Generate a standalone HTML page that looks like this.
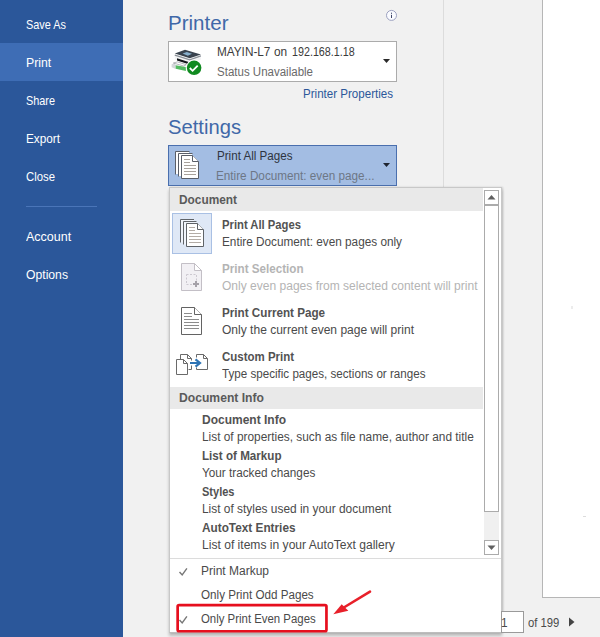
<!DOCTYPE html>
<html><head><meta charset="utf-8"><title>Print</title>
<style>
html,body{margin:0;padding:0}
body{width:600px;height:637px;position:relative;overflow:hidden;background:#f1f1f1;font-family:"Liberation Sans",sans-serif}
.abs{position:absolute}
.t{position:absolute;white-space:nowrap;line-height:20px;height:20px;transform-origin:0 50%}
</style></head><body>
<!-- sidebar -->
<div class="abs" style="left:0;top:0;width:123px;height:637px;background:#2b579a"></div>
<div class="abs" style="left:0;top:43px;width:123px;height:38px;background:#3e6db5"></div>
<div class="abs" style="left:26px;top:206px;width:71px;height:1px;background:#4a75b8"></div>
<!-- divider + preview -->
<div class="abs" style="left:443px;top:0;width:1px;height:200px;background:#dcdcdc"></div>
<div class="abs" style="left:542px;top:-1px;width:70px;height:597px;background:#fff;border:1px solid #b6b6b6"></div>
<div class="abs" style="left:571px;top:306px;width:2px;height:3px;background:#ececec"></div><div class="abs" style="left:583px;top:516px;width:3px;height:1px;background:#dcdcdc"></div>
<!-- info icon -->
<svg class="abs" style="left:385px;top:9px" width="13" height="13" viewBox="0 0 13 13"><circle cx="6.5" cy="6.4" r="5" fill="#fafbff" stroke="#9ca1c0" stroke-width="1"/><rect x="6" y="5.8" width="1" height="3.2" fill="#3d4668"/><rect x="6" y="3.7" width="1" height="1.1" fill="#3d4668"/></svg>
<!-- printer box -->
<div class="abs" style="left:168px;top:41px;width:227px;height:39px;background:#fff;border:1px solid #ababab"></div>
<svg class="abs" style="left:383px;top:59px" width="7" height="4" viewBox="0 0 7 4"><path d="M0 0H7L3.5 4Z" fill="#2a2a2a"/></svg>
<!-- settings box -->
<div class="abs" style="left:168px;top:145px;width:227px;height:39px;background:#a3bde3;border:1px solid #4a6fae"></div>
<svg class="abs" style="left:383px;top:163px" width="7" height="4" viewBox="0 0 7 4"><path d="M0 0H7L3.5 4Z" fill="#1e2430"/></svg>
<!-- popup -->
<div class="abs" style="left:169px;top:187px;width:333px;height:446px;background:#fff;border:1px solid #c8c8c8;border-bottom-color:#bdbdbd;box-sizing:border-box;box-shadow:0 3px 3px rgba(0,0,0,0.22),1px 0 2px rgba(0,0,0,0.14)"></div>
<div class="abs" style="left:170px;top:188px;width:313px;height:23px;background:#e9e9e9"></div>
<div class="abs" style="left:170px;top:387px;width:313px;height:22px;background:#e9e9e9"></div>
<div class="abs" style="left:172px;top:213px;width:38px;height:39px;background:#dfe8f6;border:1px solid #a9c0e4"></div>
<div class="abs" style="left:170px;top:558px;width:331px;height:1px;background:#dcdcdc"></div>
<!-- scrollbar -->
<div class="abs" style="left:484px;top:190px;width:13px;height:13px;background:#fff;border:1px solid #ababab"></div>
<svg class="abs" style="left:487px;top:194px" width="9" height="6" viewBox="0 0 9 6"><path d="M0.5 5.5H8.5L4.5 1Z" fill="#606060"/></svg>
<div class="abs" style="left:484px;top:205px;width:13px;height:305px;background:#fff;border:1px solid #ababab"></div>
<div class="abs" style="left:484px;top:512px;width:15px;height:28px;background:#f0f0f0"></div>
<div class="abs" style="left:484px;top:540px;width:13px;height:13px;background:#fff;border:1px solid #ababab"></div>
<svg class="abs" style="left:487px;top:545px" width="9" height="6" viewBox="0 0 9 6"><path d="M0.5 0.5H8.5L4.5 5Z" fill="#606060"/></svg>
<!-- page number -->
<div class="abs" style="left:501px;top:611px;width:21px;height:20px;background:#fff;border:1px solid #9a9a9a"></div>
<svg class="abs" style="left:569px;top:617px" width="6" height="10" viewBox="0 0 6 10"><path d="M0 0.5L5.5 5L0 9.5Z" fill="#444"/></svg>
<!-- red box + arrow -->
<svg class="abs" style="left:170px;top:598px" width="165" height="39" viewBox="170 598 165 39"><rect x="177.65" y="605.05" width="148.8" height="26.2" rx="1.5" fill="none" stroke="#e60f1e" stroke-width="2.7"/></svg>
<svg class="abs" style="left:325px;top:585px" width="55" height="40" viewBox="325 585 55 40"><path d="M370 591.7L343 608" stroke="#e8202a" stroke-width="2.6" stroke-linecap="round" fill="none"/><path d="M333.3 614.2L341.7 604.2L348.3 610.8Z" fill="#e8202a"/></svg>
<!-- checks -->
<svg class="abs" style="left:178px;top:566px" width="12" height="12" viewBox="0 0 12 12"><path d="M1.5 6L4.2 9L8.9 2.4" stroke="#777" stroke-width="1.4" fill="none"/></svg>
<svg class="abs" style="left:178px;top:614px" width="12" height="12" viewBox="0 0 12 12"><path d="M1.5 6L4.2 9L8.9 2.4" stroke="#777" stroke-width="1.4" fill="none"/></svg>
<!--ICONS_START-->
<svg class="abs" style="left:0;top:0" width="600" height="637" viewBox="0 0 600 637" fill="none">
<!-- printer icon -->
<g>
<path d="M171.6 64.2L174.8 63L175.7 65.3L175.7 68.9L171.6 67.3Z" fill="#d4d7da"/>
<path d="M174.8 54L174.8 59.6L189.8 64.6L200.9 59.6L200.9 54.6L189.8 58.4Z" fill="#f3f4f5"/>
<path d="M174.8 55.2L189.8 59.8L200.9 55.8" stroke="#8a9097" stroke-width="1.3" fill="none"/>
<path d="M174.8 53.6L185 49.7L200.9 54.5L189.8 58.3Z" fill="#39434e"/>
<path d="M182.6 53.6L186.8 52L192 53.7L187.8 55.7Z" fill="#86aecb"/>
<path d="M177 58.3L188.7 61.9L188.7 64.2L177 60.6Z" fill="#14171b"/>
<path d="M173.4 63L177.4 61.9L186.4 64.7L183.6 66Z" fill="#ffffff" stroke="#70757b" stroke-width="0.5"/>
<path d="M175.7 65.3L185.9 67L185.9 71L175.7 68.8Z" fill="#55bb62"/>
<circle cx="194.1" cy="67.8" r="8.3" fill="#fff"/>
<circle cx="194.1" cy="67.8" r="7.3" fill="#108a20"/>
<path d="M189.8 68L192.6 70.8L197.7 65.6" stroke="#fff" stroke-width="1.8"/>
</g>
<!-- settings: stacked pages (in blue box) -->
<g stroke="#5a5f69" stroke-width="1">
<path d="M175.500 174.5V151.5H189.5" fill="none"/>
<path d="M176 152H189V155H179V174H176Z" fill="#fff" stroke="none"/>
<path d="M178.500 176.5V153.500H192.5" fill="none"/>
<path d="M179 154H192V156H182V176H179Z" fill="#fff" stroke="none"/>
<path d="M181.500 155.500H192.500L198.500 161.500V178.500H181.500Z" fill="#fff"/>
<path d="M192.500 155.500V161.500H198.500" fill="#fff"/>
</g>
<g stroke="#a8a29c" stroke-width="1"><path d="M184 159.500H190M184 162.500H190M184 165.500H196M184 168.500H196M184 171.500H196M184 174.500H196"/></g>
<!-- popup: stacked pages -->
<g stroke="#5f6368" stroke-width="1">
<path d="M180.500 242.5V219.500H194V222H184V242.5Z" fill="#f0f4fb" stroke="none"/><path d="M183.500 244.500V221.500H196.500V224H187V244.5Z" fill="#f0f4fb" stroke="none"/><path d="M180.500 242.5V219.500H194"/>
<path d="M183.500 244.500V221.500H196.500"/>
<path d="M186.500 223.500H197.500L203.500 229.500V246.500H186.500Z" fill="#fff"/>
<path d="M197.500 223.500V229.500H203.500" fill="#fff"/>
</g>
<g stroke="#b3aca6" stroke-width="1"><path d="M189 227.500H195M189 230.500H195M189 233.500H201M189 236.500H201M189 239.500H201M189 242.500H201"/></g>
<!-- print selection (disabled) -->
<g stroke="#c3bfc6" stroke-width="1">
<path d="M181.500 263.500H194.500L201.500 270.500V290.500H181.500Z" fill="#f2f0f4"/>
<path d="M194.500 263.500V270.500H201.500Z" fill="#fff"/>
<path d="M186.500 274.500H196.500V284.500H186.500Z" stroke="#cdc9d1" stroke-dasharray="2 1.5"/>
</g>
<rect x="192" y="281" width="8" height="6" fill="#f2f0f4"/>
<path d="M193 284H199M196 281V287" stroke="#a5a1a9" stroke-width="2"/>
<!-- print current page -->
<g stroke="#636363" stroke-width="1">
<path d="M181.500 307.500H194.500L201.500 314.500V334.500H181.500Z" fill="#fff"/>
<path d="M194.500 307.500V314.500H201.500" fill="#fff"/>
</g>
<g stroke="#8c8c8c" stroke-width="1"><path d="M184 313.500H192M184 316.500H192M184 319.500H199M184 322.500H199M184 325.500H199M184 328.500H199"/></g>
<!-- custom print -->
<g stroke="#6a6a6a" stroke-width="1">
<path d="M180.500 359V354.500H187.500L191.500 358.500V360.500M191.500 365.500V369.500H188.500"/>
<path d="M187.500 354.500V358.500H191.500"/>
<path d="M196.500 357.500V354.500H203.500L207.500 358.500V369.500H196.500V367.500"/>
<path d="M203.500 354.500V358.500H207.500"/>
<path d="M176.500 359.500H183.500L187.500 363.500V374.500H176.500Z" fill="#fff"/>
<path d="M183.500 359.500V363.500H187.500"/>
</g>
<path d="M190 363H199.500" stroke="#2e74b5" stroke-width="2"/>
<path d="M195.500 359.300L200 363L195.500 366.700" stroke="#2e74b5" stroke-width="2.2" stroke-linejoin="miter"/>
</svg>
<!--ICONS_END-->
<div class="t" style="left:26px;top:15.2px;font-size:13px;font-weight:400;color:#fff;transform:scaleX(0.8385)">Save As</div>
<div class="t" style="left:26px;top:53.2px;font-size:13px;font-weight:400;color:#fff;transform:scaleX(0.9426)">Print</div>
<div class="t" style="left:26px;top:91.2px;font-size:13px;font-weight:400;color:#fff;transform:scaleX(0.8357)">Share</div>
<div class="t" style="left:26px;top:129.2px;font-size:13px;font-weight:400;color:#fff;transform:scaleX(0.9048)">Export</div>
<div class="t" style="left:26px;top:167.2px;font-size:13px;font-weight:400;color:#fff;transform:scaleX(0.8722)">Close</div>
<div class="t" style="left:26px;top:227.2px;font-size:13px;font-weight:400;color:#fff;transform:scaleX(0.9620)">Account</div>
<div class="t" style="left:26px;top:265.2px;font-size:13px;font-weight:400;color:#fff;transform:scaleX(0.9372)">Options</div>
<div class="t" style="left:168.2px;top:13.2px;font-size:20.5px;font-weight:400;color:#4068a8;transform:scaleX(1.0018)">Printer</div>
<div class="t" style="left:168.2px;top:117.2px;font-size:20.5px;font-weight:400;color:#4068a8;transform:scaleX(0.9854)">Settings</div>
<div class="t" style="left:216.6px;top:41.7px;font-size:12.5px;font-weight:400;color:#3b3b3b;transform:scaleX(0.9412)">MAYIN-L7</div>
<div class="t" style="left:274.4px;top:41.7px;font-size:12.5px;font-weight:400;color:#3b3b3b;transform:scaleX(0.9492)">on</div>
<div class="t" style="left:291.6px;top:41.7px;font-size:12.5px;font-weight:400;color:#3b3b3b;transform:scaleX(0.8589)">192.168.1.18</div>
<div class="t" style="left:217px;top:61.7px;font-size:12.5px;font-weight:400;color:#6a6a6a;transform:scaleX(0.9210)">Status Unavailable</div>
<div class="t" style="left:302.5px;top:83.8px;font-size:12.5px;font-weight:400;color:#2b579a;transform:scaleX(0.9253)">Printer Properties</div>
<div class="t" style="left:216.6px;top:145.6px;font-size:12.5px;font-weight:400;color:#2e3440;transform:scaleX(0.9287)">Print All Pages</div>
<div class="t" style="left:216.2px;top:165.8px;font-size:12.5px;font-weight:400;color:#6d7786;transform:scaleX(0.9381)">Entire Document: even page...</div>
<div class="t" style="left:179.3px;top:189.6px;font-size:12.5px;font-weight:700;color:#5a5a5a;transform:scaleX(0.9489)">Document</div>
<div class="t" style="left:221.7px;top:215.0px;font-size:12.5px;font-weight:700;color:#525252;transform:scaleX(0.9001)">Print All Pages</div>
<div class="t" style="left:221.5px;top:232.3px;font-size:12.5px;font-weight:400;color:#4a4a4a;transform:scaleX(0.9419)">Entire Document: even pages only</div>
<div class="t" style="left:221.9px;top:259.0px;font-size:12.5px;font-weight:700;color:#b4b4b4;transform:scaleX(0.9322)">Print Selection</div>
<div class="t" style="left:221.5px;top:276.0px;font-size:12.5px;font-weight:400;color:#b4b4b4;transform:scaleX(0.9626)">Only even pages from selected content will print</div>
<div class="t" style="left:221.9px;top:303.0px;font-size:12.5px;font-weight:700;color:#525252;transform:scaleX(0.9336)">Print Current Page</div>
<div class="t" style="left:221.5px;top:319.5px;font-size:12.5px;font-weight:400;color:#4a4a4a;transform:scaleX(0.9628)">Only the current even page will print</div>
<div class="t" style="left:221.9px;top:346.5px;font-size:12.5px;font-weight:700;color:#525252;transform:scaleX(0.9187)">Custom Print</div>
<div class="t" style="left:221.5px;top:363.5px;font-size:12.5px;font-weight:400;color:#4a4a4a;transform:scaleX(0.9298)">Type specific pages, sections or ranges</div>
<div class="t" style="left:179px;top:388.0px;font-size:12.5px;font-weight:700;color:#5a5a5a;transform:scaleX(0.9714)">Document Info</div>
<div class="t" style="left:201.8px;top:409.5px;font-size:12.5px;font-weight:700;color:#525252;transform:scaleX(0.9600)">Document Info</div>
<div class="t" style="left:201.8px;top:427.0px;font-size:12.5px;font-weight:400;color:#4a4a4a;transform:scaleX(0.9494)">List of properties, such as file name, author and title</div>
<div class="t" style="left:201.8px;top:446.0px;font-size:12.5px;font-weight:700;color:#525252;transform:scaleX(0.9307)">List of Markup</div>
<div class="t" style="left:201.8px;top:463.0px;font-size:12.5px;font-weight:400;color:#4a4a4a;transform:scaleX(0.9406)">Your tracked changes</div>
<div class="t" style="left:201.8px;top:481.5px;font-size:12.5px;font-weight:700;color:#525252;transform:scaleX(0.8821)">Styles</div>
<div class="t" style="left:201.8px;top:499.0px;font-size:12.5px;font-weight:400;color:#4a4a4a;transform:scaleX(0.9526)">List of styles used in your document</div>
<div class="t" style="left:201.8px;top:518.0px;font-size:12.5px;font-weight:700;color:#525252;transform:scaleX(0.9436)">AutoText Entries</div>
<div class="t" style="left:201.8px;top:534.5px;font-size:12.5px;font-weight:400;color:#4a4a4a;transform:scaleX(0.9669)">List of items in your AutoText gallery</div>
<div class="t" style="left:201.3px;top:561.4px;font-size:12.5px;font-weight:400;color:#4a4a4a;transform:scaleX(0.9596)">Print Markup</div>
<div class="t" style="left:201.3px;top:584.9px;font-size:12.5px;font-weight:400;color:#4a4a4a;transform:scaleX(0.9321)">Only Print Odd Pages</div>
<div class="t" style="left:201.3px;top:609.0px;font-size:12.5px;font-weight:400;color:#4a4a4a;transform:scaleX(0.9120)">Only Print Even Pages</div>
<div class="t" style="left:501.2px;top:612.6px;font-size:12.5px;font-weight:400;color:#4a4a4a;transform:scaleX(0.9492)">1</div>
<div class="t" style="left:527.6px;top:612.6px;font-size:12.5px;font-weight:400;color:#4a4a4a;transform:scaleX(0.9032)">of 199</div>
</body></html>
